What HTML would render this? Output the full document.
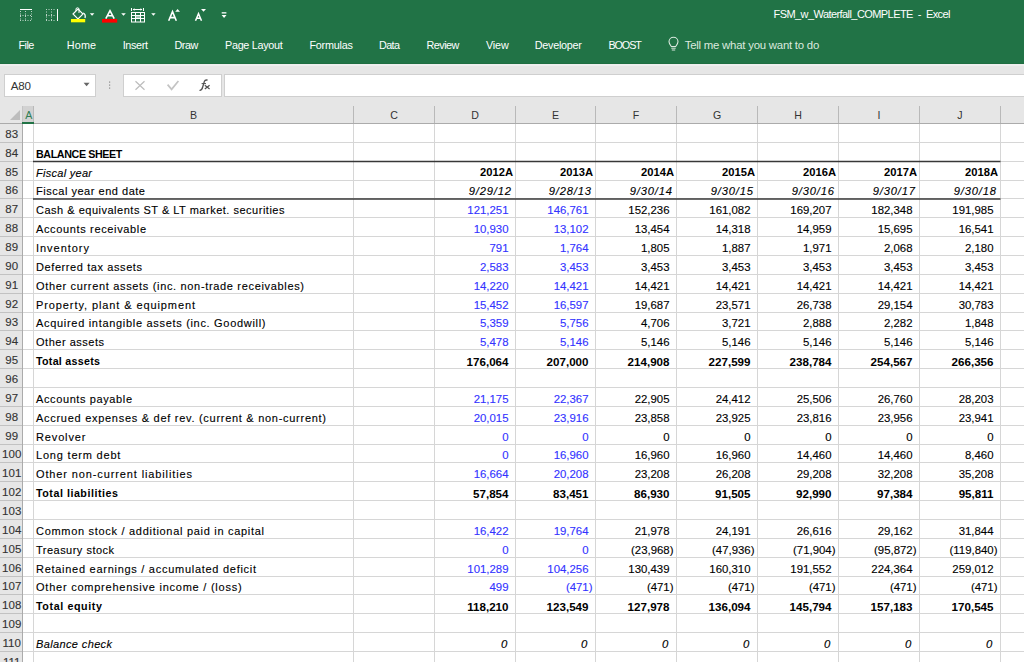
<!DOCTYPE html>
<html><head><meta charset="utf-8"><style>
html,body{margin:0;padding:0;width:1024px;height:662px;overflow:hidden;background:#fff;position:relative;font-family:"Liberation Sans",sans-serif;}
.t,.c{position:absolute;white-space:nowrap;line-height:1;}
.c{-webkit-text-stroke:0.12px currentColor;}
.cb{position:absolute;white-space:nowrap;line-height:1;}
.r{position:absolute;}
</style></head><body>
<div class="r" style="left:0px;top:0px;width:1024px;height:64px;background:#217346;"></div>
<div class="t" style="top:9.29px;font-size:11px;color:#fff;letter-spacing:-0.570px;left:773.50px;white-space:pre;">FSM_w_Waterfall_COMPLETE  -  Excel</div>
<div class="t" style="top:39.66px;font-size:10.8px;color:#fff;letter-spacing:-0.601px;left:18.60px;">File</div>
<div class="t" style="top:39.66px;font-size:10.8px;color:#fff;letter-spacing:0.163px;left:66.80px;">Home</div>
<div class="t" style="top:39.66px;font-size:10.8px;color:#fff;letter-spacing:-0.342px;left:122.70px;">Insert</div>
<div class="t" style="top:39.66px;font-size:10.8px;color:#fff;letter-spacing:-0.401px;left:174.40px;">Draw</div>
<div class="t" style="top:39.66px;font-size:10.8px;color:#fff;letter-spacing:-0.285px;left:225.00px;">Page Layout</div>
<div class="t" style="top:39.66px;font-size:10.8px;color:#fff;letter-spacing:-0.202px;left:309.40px;">Formulas</div>
<div class="t" style="top:39.66px;font-size:10.8px;color:#fff;letter-spacing:-0.604px;left:379.00px;">Data</div>
<div class="t" style="top:39.66px;font-size:10.8px;color:#fff;letter-spacing:-0.522px;left:426.60px;">Review</div>
<div class="t" style="top:39.66px;font-size:10.8px;color:#fff;letter-spacing:-0.172px;left:486.00px;">View</div>
<div class="t" style="top:39.66px;font-size:10.8px;color:#fff;letter-spacing:-0.254px;left:534.70px;">Developer</div>
<div class="t" style="top:39.66px;font-size:10.8px;color:#fff;letter-spacing:-1.076px;left:608.40px;">BOOST</div>
<div class="t" style="top:39.55px;font-size:11.4px;color:#dbe9df;letter-spacing:-0.230px;left:684.70px;">Tell me what you want to do</div>
<div class="r" style="left:0px;top:64px;width:1024px;height:60px;background:#e6e6e6;"></div>
<div class="r" style="left:0px;top:63px;width:1024px;height:1px;background:#1f6e41;"></div>
<div class="r" style="left:0px;top:64px;width:1024px;height:2px;background:#eeeeee;"></div>
<div class="r" style="left:4px;top:74px;width:92px;height:23px;background:#fff;border:1px solid #cfcfcf;box-sizing:border-box;"></div>
<div class="t" style="top:80.08px;font-size:11.6px;color:#333;letter-spacing:-0.170px;left:10.70px;">A80</div>
<div class="r" style="left:123px;top:74px;width:99px;height:23px;background:#fff;border:1px solid #cfcfcf;box-sizing:border-box;"></div>
<div class="r" style="left:224px;top:74px;width:800px;height:23px;background:#fff;border:1px solid #cfcfcf;border-right:none;box-sizing:border-box;"></div>
<div class="r" style="left:22px;top:106px;width:12px;height:17px;background:#d2d2d2;"></div>
<div class="t" style="top:110.33px;font-size:10.6px;color:#2f7d55;left:25.26px;">A</div>
<div class="t" style="top:110.33px;font-size:10.6px;color:#333;left:189.96px;">B</div>
<div class="t" style="top:110.33px;font-size:10.6px;color:#333;left:390.17px;">C</div>
<div class="t" style="top:110.33px;font-size:10.6px;color:#333;left:471.17px;">D</div>
<div class="t" style="top:110.33px;font-size:10.6px;color:#333;left:551.96px;">E</div>
<div class="t" style="top:110.33px;font-size:10.6px;color:#333;left:632.76px;">F</div>
<div class="t" style="top:110.33px;font-size:10.6px;color:#333;left:712.88px;">G</div>
<div class="t" style="top:110.33px;font-size:10.6px;color:#333;left:794.17px;">H</div>
<div class="t" style="top:110.33px;font-size:10.6px;color:#333;left:877.53px;">I</div>
<div class="t" style="top:110.33px;font-size:10.6px;color:#333;left:957.35px;">J</div>
<div class="r" style="left:23px;top:124px;width:1001px;height:538px;background:#fff;"></div>
<div class="r" style="left:0px;top:124px;width:22px;height:538px;background:#e6e6e6;"></div>
<div class="r" style="left:23px;top:142px;width:1001px;height:1px;background:#d6d6d6;"></div>
<div class="r" style="left:0px;top:142px;width:22px;height:1px;background:#c2c2c2;"></div>
<div class="r" style="left:23px;top:161px;width:1001px;height:1px;background:#d6d6d6;"></div>
<div class="r" style="left:0px;top:161px;width:22px;height:1px;background:#c2c2c2;"></div>
<div class="r" style="left:23px;top:180px;width:1001px;height:1px;background:#d6d6d6;"></div>
<div class="r" style="left:0px;top:180px;width:22px;height:1px;background:#c2c2c2;"></div>
<div class="r" style="left:23px;top:198px;width:1001px;height:1px;background:#d6d6d6;"></div>
<div class="r" style="left:0px;top:198px;width:22px;height:1px;background:#c2c2c2;"></div>
<div class="r" style="left:23px;top:217px;width:1001px;height:1px;background:#d6d6d6;"></div>
<div class="r" style="left:0px;top:217px;width:22px;height:1px;background:#c2c2c2;"></div>
<div class="r" style="left:23px;top:236px;width:1001px;height:1px;background:#d6d6d6;"></div>
<div class="r" style="left:0px;top:236px;width:22px;height:1px;background:#c2c2c2;"></div>
<div class="r" style="left:23px;top:255px;width:1001px;height:1px;background:#d6d6d6;"></div>
<div class="r" style="left:0px;top:255px;width:22px;height:1px;background:#c2c2c2;"></div>
<div class="r" style="left:23px;top:274px;width:1001px;height:1px;background:#d6d6d6;"></div>
<div class="r" style="left:0px;top:274px;width:22px;height:1px;background:#c2c2c2;"></div>
<div class="r" style="left:23px;top:293px;width:1001px;height:1px;background:#d6d6d6;"></div>
<div class="r" style="left:0px;top:293px;width:22px;height:1px;background:#c2c2c2;"></div>
<div class="r" style="left:23px;top:312px;width:1001px;height:1px;background:#d6d6d6;"></div>
<div class="r" style="left:0px;top:312px;width:22px;height:1px;background:#c2c2c2;"></div>
<div class="r" style="left:23px;top:330px;width:1001px;height:1px;background:#d6d6d6;"></div>
<div class="r" style="left:0px;top:330px;width:22px;height:1px;background:#c2c2c2;"></div>
<div class="r" style="left:23px;top:349px;width:1001px;height:1px;background:#d6d6d6;"></div>
<div class="r" style="left:0px;top:349px;width:22px;height:1px;background:#c2c2c2;"></div>
<div class="r" style="left:23px;top:368px;width:1001px;height:1px;background:#d6d6d6;"></div>
<div class="r" style="left:0px;top:368px;width:22px;height:1px;background:#c2c2c2;"></div>
<div class="r" style="left:23px;top:387px;width:1001px;height:1px;background:#d6d6d6;"></div>
<div class="r" style="left:0px;top:387px;width:22px;height:1px;background:#c2c2c2;"></div>
<div class="r" style="left:23px;top:406px;width:1001px;height:1px;background:#d6d6d6;"></div>
<div class="r" style="left:0px;top:406px;width:22px;height:1px;background:#c2c2c2;"></div>
<div class="r" style="left:23px;top:425px;width:1001px;height:1px;background:#d6d6d6;"></div>
<div class="r" style="left:0px;top:425px;width:22px;height:1px;background:#c2c2c2;"></div>
<div class="r" style="left:23px;top:444px;width:1001px;height:1px;background:#d6d6d6;"></div>
<div class="r" style="left:0px;top:444px;width:22px;height:1px;background:#c2c2c2;"></div>
<div class="r" style="left:23px;top:462px;width:1001px;height:1px;background:#d6d6d6;"></div>
<div class="r" style="left:0px;top:462px;width:22px;height:1px;background:#c2c2c2;"></div>
<div class="r" style="left:23px;top:481px;width:1001px;height:1px;background:#d6d6d6;"></div>
<div class="r" style="left:0px;top:481px;width:22px;height:1px;background:#c2c2c2;"></div>
<div class="r" style="left:23px;top:500px;width:1001px;height:1px;background:#d6d6d6;"></div>
<div class="r" style="left:0px;top:500px;width:22px;height:1px;background:#c2c2c2;"></div>
<div class="r" style="left:23px;top:519px;width:1001px;height:1px;background:#d6d6d6;"></div>
<div class="r" style="left:0px;top:519px;width:22px;height:1px;background:#c2c2c2;"></div>
<div class="r" style="left:23px;top:538px;width:1001px;height:1px;background:#d6d6d6;"></div>
<div class="r" style="left:0px;top:538px;width:22px;height:1px;background:#c2c2c2;"></div>
<div class="r" style="left:23px;top:557px;width:1001px;height:1px;background:#d6d6d6;"></div>
<div class="r" style="left:0px;top:557px;width:22px;height:1px;background:#c2c2c2;"></div>
<div class="r" style="left:23px;top:576px;width:1001px;height:1px;background:#d6d6d6;"></div>
<div class="r" style="left:0px;top:576px;width:22px;height:1px;background:#c2c2c2;"></div>
<div class="r" style="left:23px;top:594px;width:1001px;height:1px;background:#d6d6d6;"></div>
<div class="r" style="left:0px;top:594px;width:22px;height:1px;background:#c2c2c2;"></div>
<div class="r" style="left:23px;top:613px;width:1001px;height:1px;background:#d6d6d6;"></div>
<div class="r" style="left:0px;top:613px;width:22px;height:1px;background:#c2c2c2;"></div>
<div class="r" style="left:23px;top:632px;width:1001px;height:1px;background:#d6d6d6;"></div>
<div class="r" style="left:0px;top:632px;width:22px;height:1px;background:#c2c2c2;"></div>
<div class="r" style="left:23px;top:651px;width:1001px;height:1px;background:#d6d6d6;"></div>
<div class="r" style="left:0px;top:651px;width:22px;height:1px;background:#c2c2c2;"></div>
<div class="r" style="left:33px;top:124px;width:1px;height:538px;background:#d6d6d6;"></div>
<div class="r" style="left:353px;top:124px;width:1px;height:538px;background:#d6d6d6;"></div>
<div class="r" style="left:434px;top:124px;width:1px;height:538px;background:#d6d6d6;"></div>
<div class="r" style="left:515px;top:124px;width:1px;height:538px;background:#d6d6d6;"></div>
<div class="r" style="left:595px;top:124px;width:1px;height:538px;background:#d6d6d6;"></div>
<div class="r" style="left:676px;top:124px;width:1px;height:538px;background:#d6d6d6;"></div>
<div class="r" style="left:757px;top:124px;width:1px;height:538px;background:#d6d6d6;"></div>
<div class="r" style="left:838px;top:124px;width:1px;height:538px;background:#d6d6d6;"></div>
<div class="r" style="left:919px;top:124px;width:1px;height:538px;background:#d6d6d6;"></div>
<div class="r" style="left:1000px;top:124px;width:1px;height:538px;background:#d6d6d6;"></div>
<div class="r" style="left:353px;top:106px;width:1px;height:17px;background:#b9b9b9;"></div>
<div class="r" style="left:434px;top:106px;width:1px;height:17px;background:#b9b9b9;"></div>
<div class="r" style="left:515px;top:106px;width:1px;height:17px;background:#b9b9b9;"></div>
<div class="r" style="left:595px;top:106px;width:1px;height:17px;background:#b9b9b9;"></div>
<div class="r" style="left:676px;top:106px;width:1px;height:17px;background:#b9b9b9;"></div>
<div class="r" style="left:757px;top:106px;width:1px;height:17px;background:#b9b9b9;"></div>
<div class="r" style="left:838px;top:106px;width:1px;height:17px;background:#b9b9b9;"></div>
<div class="r" style="left:919px;top:106px;width:1px;height:17px;background:#b9b9b9;"></div>
<div class="r" style="left:1000px;top:106px;width:1px;height:17px;background:#b9b9b9;"></div>
<div class="r" style="left:33px;top:106px;width:1px;height:17px;background:#b9b9b9;"></div>
<div class="r" style="left:0px;top:123px;width:1024px;height:1px;background:#ababab;"></div>
<div class="r" style="left:22px;top:123px;width:1px;height:539px;background:#ababab;"></div>
<div class="r" style="left:22px;top:106px;width:1px;height:17px;background:#c4c4c4;"></div>
<div class="r" style="left:22px;top:122px;width:12px;height:2px;background:#217346;"></div>
<svg class="r" style="left:10px;top:110px" width="10" height="10"><path d="M10 0 L10 10 L0 10 Z" fill="#bdbdbd"/></svg>
<div class="c" style="top:129.27px;font-size:11.5px;color:#333;left:5.30px;">83</div>
<div class="c" style="top:148.27px;font-size:11.5px;color:#333;left:5.30px;">84</div>
<div class="c" style="top:167.27px;font-size:11.5px;color:#333;left:5.30px;">85</div>
<div class="c" style="top:185.27px;font-size:11.5px;color:#333;left:5.30px;">86</div>
<div class="c" style="top:204.27px;font-size:11.5px;color:#333;left:5.30px;">87</div>
<div class="c" style="top:223.27px;font-size:11.5px;color:#333;left:5.30px;">88</div>
<div class="c" style="top:242.27px;font-size:11.5px;color:#333;left:5.30px;">89</div>
<div class="c" style="top:261.27px;font-size:11.5px;color:#333;left:5.30px;">90</div>
<div class="c" style="top:280.27px;font-size:11.5px;color:#333;left:5.30px;">91</div>
<div class="c" style="top:299.27px;font-size:11.5px;color:#333;left:5.30px;">92</div>
<div class="c" style="top:317.27px;font-size:11.5px;color:#333;left:5.30px;">93</div>
<div class="c" style="top:336.27px;font-size:11.5px;color:#333;left:5.30px;">94</div>
<div class="c" style="top:355.27px;font-size:11.5px;color:#333;left:5.30px;">95</div>
<div class="c" style="top:374.27px;font-size:11.5px;color:#333;left:5.30px;">96</div>
<div class="c" style="top:393.27px;font-size:11.5px;color:#333;left:5.30px;">97</div>
<div class="c" style="top:412.27px;font-size:11.5px;color:#333;left:5.30px;">98</div>
<div class="c" style="top:431.27px;font-size:11.5px;color:#333;left:5.30px;">99</div>
<div class="c" style="top:449.27px;font-size:11.5px;color:#333;left:2.11px;">100</div>
<div class="c" style="top:468.27px;font-size:11.5px;color:#333;left:2.11px;">101</div>
<div class="c" style="top:487.27px;font-size:11.5px;color:#333;left:2.11px;">102</div>
<div class="c" style="top:506.27px;font-size:11.5px;color:#333;left:2.11px;">103</div>
<div class="c" style="top:525.27px;font-size:11.5px;color:#333;left:2.11px;">104</div>
<div class="c" style="top:544.27px;font-size:11.5px;color:#333;left:2.11px;">105</div>
<div class="c" style="top:563.27px;font-size:11.5px;color:#333;left:2.11px;">106</div>
<div class="c" style="top:581.27px;font-size:11.5px;color:#333;left:2.11px;">107</div>
<div class="c" style="top:600.27px;font-size:11.5px;color:#333;left:2.11px;">108</div>
<div class="c" style="top:619.27px;font-size:11.5px;color:#333;left:2.11px;">109</div>
<div class="c" style="top:638.27px;font-size:11.5px;color:#333;left:2.53px;">110</div>
<div class="c" style="top:657.27px;font-size:11.5px;color:#333;left:2.96px;">111</div>
<div class="cb" style="top:148.94px;font-size:10.7px;color:#000;font-weight:bold;letter-spacing:-0.372px;left:36.00px;">BALANCE SHEET</div>
<div class="c" style="top:167.69px;font-size:11px;color:#000;font-style:italic;letter-spacing:0.282px;left:36.00px;">Fiscal year</div>
<div class="c" style="top:185.69px;font-size:11px;color:#000;letter-spacing:0.523px;left:36.00px;">Fiscal year end date</div>
<div class="c" style="top:204.69px;font-size:11px;color:#000;letter-spacing:0.506px;left:36.00px;">Cash &amp; equivalents ST &amp; LT market. securities</div>
<div class="c" style="top:223.69px;font-size:11px;color:#000;letter-spacing:0.642px;left:36.00px;">Accounts receivable</div>
<div class="c" style="top:242.69px;font-size:11px;color:#000;letter-spacing:0.969px;left:36.00px;">Inventory</div>
<div class="c" style="top:261.69px;font-size:11px;color:#000;letter-spacing:0.590px;left:36.00px;">Deferred tax assets</div>
<div class="c" style="top:280.69px;font-size:11px;color:#000;letter-spacing:0.667px;left:36.00px;">Other current assets (inc. non-trade receivables)</div>
<div class="c" style="top:299.69px;font-size:11px;color:#000;letter-spacing:0.902px;left:36.00px;">Property, plant &amp; equipment</div>
<div class="c" style="top:317.69px;font-size:11px;color:#000;letter-spacing:0.691px;left:36.00px;">Acquired intangible assets (inc. Goodwill)</div>
<div class="c" style="top:336.69px;font-size:11px;color:#000;letter-spacing:0.513px;left:36.00px;">Other assets</div>
<div class="cb" style="top:355.94px;font-size:10.7px;color:#000;font-weight:bold;letter-spacing:0.268px;left:36.00px;">Total assets</div>
<div class="c" style="top:393.69px;font-size:11px;color:#000;letter-spacing:0.611px;left:36.00px;">Accounts payable</div>
<div class="c" style="top:412.69px;font-size:11px;color:#000;letter-spacing:0.717px;left:36.00px;">Accrued expenses &amp; def rev. (current &amp; non-current)</div>
<div class="c" style="top:431.69px;font-size:11px;color:#000;letter-spacing:0.856px;left:36.00px;">Revolver</div>
<div class="c" style="top:449.69px;font-size:11px;color:#000;letter-spacing:0.800px;left:36.00px;">Long term debt</div>
<div class="c" style="top:468.69px;font-size:11px;color:#000;letter-spacing:0.877px;left:36.00px;">Other non-current liabilities</div>
<div class="cb" style="top:487.94px;font-size:10.7px;color:#000;font-weight:bold;letter-spacing:0.530px;left:36.00px;">Total liabilities</div>
<div class="c" style="top:525.69px;font-size:11px;color:#000;letter-spacing:0.701px;left:36.00px;">Common stock / additional paid in capital</div>
<div class="c" style="top:544.69px;font-size:11px;color:#000;letter-spacing:0.483px;left:36.00px;">Treasury stock</div>
<div class="c" style="top:563.69px;font-size:11px;color:#000;letter-spacing:0.721px;left:36.00px;">Retained earnings / accumulated deficit</div>
<div class="c" style="top:581.69px;font-size:11px;color:#000;letter-spacing:0.761px;left:36.00px;">Other comprehensive income / (loss)</div>
<div class="cb" style="top:600.94px;font-size:10.7px;color:#000;font-weight:bold;letter-spacing:0.614px;left:36.00px;">Total equity</div>
<div class="c" style="top:638.69px;font-size:11px;color:#000;font-style:italic;letter-spacing:0.371px;left:36.00px;">Balance check</div>
<div class="cb" style="top:167.32px;font-size:11.2px;color:#000;font-weight:bold;right:511.00px;text-align:right;">2012A</div>
<div class="cb" style="top:167.32px;font-size:11.2px;color:#000;font-weight:bold;right:431.00px;text-align:right;">2013A</div>
<div class="cb" style="top:167.32px;font-size:11.2px;color:#000;font-weight:bold;right:350.00px;text-align:right;">2014A</div>
<div class="cb" style="top:167.32px;font-size:11.2px;color:#000;font-weight:bold;right:269.00px;text-align:right;">2015A</div>
<div class="cb" style="top:167.32px;font-size:11.2px;color:#000;font-weight:bold;right:188.00px;text-align:right;">2016A</div>
<div class="cb" style="top:167.32px;font-size:11.2px;color:#000;font-weight:bold;right:107.00px;text-align:right;">2017A</div>
<div class="cb" style="top:167.32px;font-size:11.2px;color:#000;font-weight:bold;right:26.00px;text-align:right;">2018A</div>
<div class="c" style="top:185.52px;font-size:11.2px;color:#000;font-style:italic;letter-spacing:0.805px;right:512.19px;text-align:right;">9/29/12</div>
<div class="c" style="top:185.52px;font-size:11.2px;color:#000;font-style:italic;letter-spacing:0.805px;right:432.19px;text-align:right;">9/28/13</div>
<div class="c" style="top:185.52px;font-size:11.2px;color:#000;font-style:italic;letter-spacing:0.805px;right:351.19px;text-align:right;">9/30/14</div>
<div class="c" style="top:185.52px;font-size:11.2px;color:#000;font-style:italic;letter-spacing:0.805px;right:270.19px;text-align:right;">9/30/15</div>
<div class="c" style="top:185.52px;font-size:11.2px;color:#000;font-style:italic;letter-spacing:0.805px;right:189.19px;text-align:right;">9/30/16</div>
<div class="c" style="top:185.52px;font-size:11.2px;color:#000;font-style:italic;letter-spacing:0.805px;right:108.19px;text-align:right;">9/30/17</div>
<div class="c" style="top:185.52px;font-size:11.2px;color:#000;font-style:italic;letter-spacing:0.805px;right:27.19px;text-align:right;">9/30/18</div>
<div class="c" style="top:204.85px;font-size:11.4px;color:#3333ff;right:515.50px;text-align:right;">121,251</div>
<div class="c" style="top:204.85px;font-size:11.4px;color:#3333ff;right:435.50px;text-align:right;">146,761</div>
<div class="c" style="top:204.85px;font-size:11.4px;color:#000;right:354.50px;text-align:right;">152,236</div>
<div class="c" style="top:204.85px;font-size:11.4px;color:#000;right:273.50px;text-align:right;">161,082</div>
<div class="c" style="top:204.85px;font-size:11.4px;color:#000;right:192.50px;text-align:right;">169,207</div>
<div class="c" style="top:204.85px;font-size:11.4px;color:#000;right:111.50px;text-align:right;">182,348</div>
<div class="c" style="top:204.85px;font-size:11.4px;color:#000;right:30.50px;text-align:right;">191,985</div>
<div class="c" style="top:223.85px;font-size:11.4px;color:#3333ff;right:515.50px;text-align:right;">10,930</div>
<div class="c" style="top:223.85px;font-size:11.4px;color:#3333ff;right:435.50px;text-align:right;">13,102</div>
<div class="c" style="top:223.85px;font-size:11.4px;color:#000;right:354.50px;text-align:right;">13,454</div>
<div class="c" style="top:223.85px;font-size:11.4px;color:#000;right:273.50px;text-align:right;">14,318</div>
<div class="c" style="top:223.85px;font-size:11.4px;color:#000;right:192.50px;text-align:right;">14,959</div>
<div class="c" style="top:223.85px;font-size:11.4px;color:#000;right:111.50px;text-align:right;">15,695</div>
<div class="c" style="top:223.85px;font-size:11.4px;color:#000;right:30.50px;text-align:right;">16,541</div>
<div class="c" style="top:242.85px;font-size:11.4px;color:#3333ff;right:515.50px;text-align:right;">791</div>
<div class="c" style="top:242.85px;font-size:11.4px;color:#3333ff;right:435.50px;text-align:right;">1,764</div>
<div class="c" style="top:242.85px;font-size:11.4px;color:#000;right:354.50px;text-align:right;">1,805</div>
<div class="c" style="top:242.85px;font-size:11.4px;color:#000;right:273.50px;text-align:right;">1,887</div>
<div class="c" style="top:242.85px;font-size:11.4px;color:#000;right:192.50px;text-align:right;">1,971</div>
<div class="c" style="top:242.85px;font-size:11.4px;color:#000;right:111.50px;text-align:right;">2,068</div>
<div class="c" style="top:242.85px;font-size:11.4px;color:#000;right:30.50px;text-align:right;">2,180</div>
<div class="c" style="top:261.85px;font-size:11.4px;color:#3333ff;right:515.50px;text-align:right;">2,583</div>
<div class="c" style="top:261.85px;font-size:11.4px;color:#3333ff;right:435.50px;text-align:right;">3,453</div>
<div class="c" style="top:261.85px;font-size:11.4px;color:#000;right:354.50px;text-align:right;">3,453</div>
<div class="c" style="top:261.85px;font-size:11.4px;color:#000;right:273.50px;text-align:right;">3,453</div>
<div class="c" style="top:261.85px;font-size:11.4px;color:#000;right:192.50px;text-align:right;">3,453</div>
<div class="c" style="top:261.85px;font-size:11.4px;color:#000;right:111.50px;text-align:right;">3,453</div>
<div class="c" style="top:261.85px;font-size:11.4px;color:#000;right:30.50px;text-align:right;">3,453</div>
<div class="c" style="top:280.85px;font-size:11.4px;color:#3333ff;right:515.50px;text-align:right;">14,220</div>
<div class="c" style="top:280.85px;font-size:11.4px;color:#3333ff;right:435.50px;text-align:right;">14,421</div>
<div class="c" style="top:280.85px;font-size:11.4px;color:#000;right:354.50px;text-align:right;">14,421</div>
<div class="c" style="top:280.85px;font-size:11.4px;color:#000;right:273.50px;text-align:right;">14,421</div>
<div class="c" style="top:280.85px;font-size:11.4px;color:#000;right:192.50px;text-align:right;">14,421</div>
<div class="c" style="top:280.85px;font-size:11.4px;color:#000;right:111.50px;text-align:right;">14,421</div>
<div class="c" style="top:280.85px;font-size:11.4px;color:#000;right:30.50px;text-align:right;">14,421</div>
<div class="c" style="top:299.85px;font-size:11.4px;color:#3333ff;right:515.50px;text-align:right;">15,452</div>
<div class="c" style="top:299.85px;font-size:11.4px;color:#3333ff;right:435.50px;text-align:right;">16,597</div>
<div class="c" style="top:299.85px;font-size:11.4px;color:#000;right:354.50px;text-align:right;">19,687</div>
<div class="c" style="top:299.85px;font-size:11.4px;color:#000;right:273.50px;text-align:right;">23,571</div>
<div class="c" style="top:299.85px;font-size:11.4px;color:#000;right:192.50px;text-align:right;">26,738</div>
<div class="c" style="top:299.85px;font-size:11.4px;color:#000;right:111.50px;text-align:right;">29,154</div>
<div class="c" style="top:299.85px;font-size:11.4px;color:#000;right:30.50px;text-align:right;">30,783</div>
<div class="c" style="top:317.85px;font-size:11.4px;color:#3333ff;right:515.50px;text-align:right;">5,359</div>
<div class="c" style="top:317.85px;font-size:11.4px;color:#3333ff;right:435.50px;text-align:right;">5,756</div>
<div class="c" style="top:317.85px;font-size:11.4px;color:#000;right:354.50px;text-align:right;">4,706</div>
<div class="c" style="top:317.85px;font-size:11.4px;color:#000;right:273.50px;text-align:right;">3,721</div>
<div class="c" style="top:317.85px;font-size:11.4px;color:#000;right:192.50px;text-align:right;">2,888</div>
<div class="c" style="top:317.85px;font-size:11.4px;color:#000;right:111.50px;text-align:right;">2,282</div>
<div class="c" style="top:317.85px;font-size:11.4px;color:#000;right:30.50px;text-align:right;">1,848</div>
<div class="c" style="top:336.85px;font-size:11.4px;color:#3333ff;right:515.50px;text-align:right;">5,478</div>
<div class="c" style="top:336.85px;font-size:11.4px;color:#3333ff;right:435.50px;text-align:right;">5,146</div>
<div class="c" style="top:336.85px;font-size:11.4px;color:#000;right:354.50px;text-align:right;">5,146</div>
<div class="c" style="top:336.85px;font-size:11.4px;color:#000;right:273.50px;text-align:right;">5,146</div>
<div class="c" style="top:336.85px;font-size:11.4px;color:#000;right:192.50px;text-align:right;">5,146</div>
<div class="c" style="top:336.85px;font-size:11.4px;color:#000;right:111.50px;text-align:right;">5,146</div>
<div class="c" style="top:336.85px;font-size:11.4px;color:#000;right:30.50px;text-align:right;">5,146</div>
<div class="cb" style="top:355.68px;font-size:11.6px;color:#000;font-weight:bold;right:515.50px;text-align:right;">176,064</div>
<div class="cb" style="top:355.68px;font-size:11.6px;color:#000;font-weight:bold;right:435.50px;text-align:right;">207,000</div>
<div class="cb" style="top:355.68px;font-size:11.6px;color:#000;font-weight:bold;right:354.50px;text-align:right;">214,908</div>
<div class="cb" style="top:355.68px;font-size:11.6px;color:#000;font-weight:bold;right:273.50px;text-align:right;">227,599</div>
<div class="cb" style="top:355.68px;font-size:11.6px;color:#000;font-weight:bold;right:192.50px;text-align:right;">238,784</div>
<div class="cb" style="top:355.68px;font-size:11.6px;color:#000;font-weight:bold;right:111.50px;text-align:right;">254,567</div>
<div class="cb" style="top:355.68px;font-size:11.6px;color:#000;font-weight:bold;right:30.50px;text-align:right;">266,356</div>
<div class="c" style="top:393.85px;font-size:11.4px;color:#3333ff;right:515.50px;text-align:right;">21,175</div>
<div class="c" style="top:393.85px;font-size:11.4px;color:#3333ff;right:435.50px;text-align:right;">22,367</div>
<div class="c" style="top:393.85px;font-size:11.4px;color:#000;right:354.50px;text-align:right;">22,905</div>
<div class="c" style="top:393.85px;font-size:11.4px;color:#000;right:273.50px;text-align:right;">24,412</div>
<div class="c" style="top:393.85px;font-size:11.4px;color:#000;right:192.50px;text-align:right;">25,506</div>
<div class="c" style="top:393.85px;font-size:11.4px;color:#000;right:111.50px;text-align:right;">26,760</div>
<div class="c" style="top:393.85px;font-size:11.4px;color:#000;right:30.50px;text-align:right;">28,203</div>
<div class="c" style="top:412.85px;font-size:11.4px;color:#3333ff;right:515.50px;text-align:right;">20,015</div>
<div class="c" style="top:412.85px;font-size:11.4px;color:#3333ff;right:435.50px;text-align:right;">23,916</div>
<div class="c" style="top:412.85px;font-size:11.4px;color:#000;right:354.50px;text-align:right;">23,858</div>
<div class="c" style="top:412.85px;font-size:11.4px;color:#000;right:273.50px;text-align:right;">23,925</div>
<div class="c" style="top:412.85px;font-size:11.4px;color:#000;right:192.50px;text-align:right;">23,816</div>
<div class="c" style="top:412.85px;font-size:11.4px;color:#000;right:111.50px;text-align:right;">23,956</div>
<div class="c" style="top:412.85px;font-size:11.4px;color:#000;right:30.50px;text-align:right;">23,941</div>
<div class="c" style="top:431.85px;font-size:11.4px;color:#3333ff;right:515.50px;text-align:right;">0</div>
<div class="c" style="top:431.85px;font-size:11.4px;color:#3333ff;right:435.50px;text-align:right;">0</div>
<div class="c" style="top:431.85px;font-size:11.4px;color:#000;right:354.50px;text-align:right;">0</div>
<div class="c" style="top:431.85px;font-size:11.4px;color:#000;right:273.50px;text-align:right;">0</div>
<div class="c" style="top:431.85px;font-size:11.4px;color:#000;right:192.50px;text-align:right;">0</div>
<div class="c" style="top:431.85px;font-size:11.4px;color:#000;right:111.50px;text-align:right;">0</div>
<div class="c" style="top:431.85px;font-size:11.4px;color:#000;right:30.50px;text-align:right;">0</div>
<div class="c" style="top:449.85px;font-size:11.4px;color:#3333ff;right:515.50px;text-align:right;">0</div>
<div class="c" style="top:449.85px;font-size:11.4px;color:#3333ff;right:435.50px;text-align:right;">16,960</div>
<div class="c" style="top:449.85px;font-size:11.4px;color:#000;right:354.50px;text-align:right;">16,960</div>
<div class="c" style="top:449.85px;font-size:11.4px;color:#000;right:273.50px;text-align:right;">16,960</div>
<div class="c" style="top:449.85px;font-size:11.4px;color:#000;right:192.50px;text-align:right;">14,460</div>
<div class="c" style="top:449.85px;font-size:11.4px;color:#000;right:111.50px;text-align:right;">14,460</div>
<div class="c" style="top:449.85px;font-size:11.4px;color:#000;right:30.50px;text-align:right;">8,460</div>
<div class="c" style="top:468.85px;font-size:11.4px;color:#3333ff;right:515.50px;text-align:right;">16,664</div>
<div class="c" style="top:468.85px;font-size:11.4px;color:#3333ff;right:435.50px;text-align:right;">20,208</div>
<div class="c" style="top:468.85px;font-size:11.4px;color:#000;right:354.50px;text-align:right;">23,208</div>
<div class="c" style="top:468.85px;font-size:11.4px;color:#000;right:273.50px;text-align:right;">26,208</div>
<div class="c" style="top:468.85px;font-size:11.4px;color:#000;right:192.50px;text-align:right;">29,208</div>
<div class="c" style="top:468.85px;font-size:11.4px;color:#000;right:111.50px;text-align:right;">32,208</div>
<div class="c" style="top:468.85px;font-size:11.4px;color:#000;right:30.50px;text-align:right;">35,208</div>
<div class="cb" style="top:487.68px;font-size:11.6px;color:#000;font-weight:bold;right:515.50px;text-align:right;">57,854</div>
<div class="cb" style="top:487.68px;font-size:11.6px;color:#000;font-weight:bold;right:435.50px;text-align:right;">83,451</div>
<div class="cb" style="top:487.68px;font-size:11.6px;color:#000;font-weight:bold;right:354.50px;text-align:right;">86,930</div>
<div class="cb" style="top:487.68px;font-size:11.6px;color:#000;font-weight:bold;right:273.50px;text-align:right;">91,505</div>
<div class="cb" style="top:487.68px;font-size:11.6px;color:#000;font-weight:bold;right:192.50px;text-align:right;">92,990</div>
<div class="cb" style="top:487.68px;font-size:11.6px;color:#000;font-weight:bold;right:111.50px;text-align:right;">97,384</div>
<div class="cb" style="top:487.68px;font-size:11.6px;color:#000;font-weight:bold;right:30.50px;text-align:right;">95,811</div>
<div class="c" style="top:525.85px;font-size:11.4px;color:#3333ff;right:515.50px;text-align:right;">16,422</div>
<div class="c" style="top:525.85px;font-size:11.4px;color:#3333ff;right:435.50px;text-align:right;">19,764</div>
<div class="c" style="top:525.85px;font-size:11.4px;color:#000;right:354.50px;text-align:right;">21,978</div>
<div class="c" style="top:525.85px;font-size:11.4px;color:#000;right:273.50px;text-align:right;">24,191</div>
<div class="c" style="top:525.85px;font-size:11.4px;color:#000;right:192.50px;text-align:right;">26,616</div>
<div class="c" style="top:525.85px;font-size:11.4px;color:#000;right:111.50px;text-align:right;">29,162</div>
<div class="c" style="top:525.85px;font-size:11.4px;color:#000;right:30.50px;text-align:right;">31,844</div>
<div class="c" style="top:544.85px;font-size:11.4px;color:#3333ff;right:515.50px;text-align:right;">0</div>
<div class="c" style="top:544.85px;font-size:11.4px;color:#3333ff;right:435.50px;text-align:right;">0</div>
<div class="c" style="top:544.85px;font-size:11.4px;color:#000;right:350.50px;text-align:right;">(23,968)</div>
<div class="c" style="top:544.85px;font-size:11.4px;color:#000;right:269.50px;text-align:right;">(47,936)</div>
<div class="c" style="top:544.85px;font-size:11.4px;color:#000;right:188.50px;text-align:right;">(71,904)</div>
<div class="c" style="top:544.85px;font-size:11.4px;color:#000;right:107.50px;text-align:right;">(95,872)</div>
<div class="c" style="top:544.85px;font-size:11.4px;color:#000;right:26.50px;text-align:right;">(119,840)</div>
<div class="c" style="top:563.85px;font-size:11.4px;color:#3333ff;right:515.50px;text-align:right;">101,289</div>
<div class="c" style="top:563.85px;font-size:11.4px;color:#3333ff;right:435.50px;text-align:right;">104,256</div>
<div class="c" style="top:563.85px;font-size:11.4px;color:#000;right:354.50px;text-align:right;">130,439</div>
<div class="c" style="top:563.85px;font-size:11.4px;color:#000;right:273.50px;text-align:right;">160,310</div>
<div class="c" style="top:563.85px;font-size:11.4px;color:#000;right:192.50px;text-align:right;">191,552</div>
<div class="c" style="top:563.85px;font-size:11.4px;color:#000;right:111.50px;text-align:right;">224,364</div>
<div class="c" style="top:563.85px;font-size:11.4px;color:#000;right:30.50px;text-align:right;">259,012</div>
<div class="c" style="top:581.85px;font-size:11.4px;color:#3333ff;right:515.50px;text-align:right;">499</div>
<div class="c" style="top:581.85px;font-size:11.4px;color:#3333ff;right:431.50px;text-align:right;">(471)</div>
<div class="c" style="top:581.85px;font-size:11.4px;color:#000;right:350.50px;text-align:right;">(471)</div>
<div class="c" style="top:581.85px;font-size:11.4px;color:#000;right:269.50px;text-align:right;">(471)</div>
<div class="c" style="top:581.85px;font-size:11.4px;color:#000;right:188.50px;text-align:right;">(471)</div>
<div class="c" style="top:581.85px;font-size:11.4px;color:#000;right:107.50px;text-align:right;">(471)</div>
<div class="c" style="top:581.85px;font-size:11.4px;color:#000;right:26.50px;text-align:right;">(471)</div>
<div class="cb" style="top:600.68px;font-size:11.6px;color:#000;font-weight:bold;right:515.50px;text-align:right;">118,210</div>
<div class="cb" style="top:600.68px;font-size:11.6px;color:#000;font-weight:bold;right:435.50px;text-align:right;">123,549</div>
<div class="cb" style="top:600.68px;font-size:11.6px;color:#000;font-weight:bold;right:354.50px;text-align:right;">127,978</div>
<div class="cb" style="top:600.68px;font-size:11.6px;color:#000;font-weight:bold;right:273.50px;text-align:right;">136,094</div>
<div class="cb" style="top:600.68px;font-size:11.6px;color:#000;font-weight:bold;right:192.50px;text-align:right;">145,794</div>
<div class="cb" style="top:600.68px;font-size:11.6px;color:#000;font-weight:bold;right:111.50px;text-align:right;">157,183</div>
<div class="cb" style="top:600.68px;font-size:11.6px;color:#000;font-weight:bold;right:30.50px;text-align:right;">170,545</div>
<div class="c" style="top:638.85px;font-size:11.4px;color:#000;font-style:italic;right:516.70px;text-align:right;">0</div>
<div class="c" style="top:638.85px;font-size:11.4px;color:#000;font-style:italic;right:436.70px;text-align:right;">0</div>
<div class="c" style="top:638.85px;font-size:11.4px;color:#000;font-style:italic;right:355.70px;text-align:right;">0</div>
<div class="c" style="top:638.85px;font-size:11.4px;color:#000;font-style:italic;right:274.70px;text-align:right;">0</div>
<div class="c" style="top:638.85px;font-size:11.4px;color:#000;font-style:italic;right:193.70px;text-align:right;">0</div>
<div class="c" style="top:638.85px;font-size:11.4px;color:#000;font-style:italic;right:112.70px;text-align:right;">0</div>
<div class="c" style="top:638.85px;font-size:11.4px;color:#000;font-style:italic;right:31.70px;text-align:right;">0</div>
<svg class="r" style="left:0;top:0" width="1024" height="100">
<g fill="none" stroke="#fff" stroke-width="1">
 <!-- icon1: borders, solid top -->
 <line x1="20" y1="9.5" x2="32" y2="9.5" stroke-width="1"/>
 <g stroke-dasharray="1 1.5" opacity="0.7">
  <line x1="20.5" y1="11" x2="20.5" y2="21"/><line x1="31.5" y1="11" x2="31.5" y2="21"/>
  <line x1="25.5" y1="11" x2="25.5" y2="21"/><line x1="20" y1="15.5" x2="32" y2="15.5"/>
  <line x1="20" y1="20.5" x2="32" y2="20.5"/>
 </g>
 <!-- icon2: borders, solid right -->
 <line x1="57.5" y1="9" x2="57.5" y2="21" stroke-width="1"/>
 <g stroke-dasharray="1 1.5" opacity="0.7">
  <line x1="46" y1="9.5" x2="56" y2="9.5"/><line x1="46" y1="20.5" x2="56" y2="20.5"/>
  <line x1="46.5" y1="9" x2="46.5" y2="21"/><line x1="51.5" y1="9" x2="51.5" y2="21"/>
  <line x1="46" y1="15.5" x2="56" y2="15.5"/>
 </g>
 <!-- paint bucket -->
 <path d="M73 14 L78 9 L83 14 L78 19 Z" stroke-width="1.1"/>
 <path d="M76 11 L76 8.5 Q77.5 7 79 8.5 L79 13" stroke-width="1"/>
 <path d="M83 13 Q86 14 85 18" stroke-width="1.3"/>
 <!-- font color A -->
 <path d="M105.8 18.6 L110 10.6 L114.2 18.6 M107.3 15.8 L112.7 15.8" stroke-width="1.6"/>
 <!-- table icon -->
 <rect x="131.5" y="12.5" width="13" height="9.5"/>
 <line x1="131.5" y1="15.5" x2="144.5" y2="15.5"/><line x1="131.5" y1="18.5" x2="144.5" y2="18.5"/>
 <line x1="135.5" y1="12.5" x2="135.5" y2="22"/><line x1="140.5" y1="12.5" x2="140.5" y2="22"/>
 <line x1="131.5" y1="8" x2="131.5" y2="11"/><line x1="143.5" y1="8" x2="143.5" y2="11"/>
 <line x1="133" y1="9.5" x2="142" y2="9.5"/>
 <!-- increase font A -->
 <path d="M168.7 20.8 L172.5 11.6 L176.3 20.8 M170.2 17.6 L174.8 17.6" stroke-width="1.6"/>
 <!-- decrease font A -->
 <path d="M195.5 20.8 L198.5 13.6 L201.5 20.8 M196.6 18.2 L200.4 18.2" stroke-width="1.5"/>
 <!-- lightbulb -->
 <path d="M671.3 46.5 Q669 43.5 669 41.8 A4.5 4.5 0 0 1 678 41.8 Q678 43.5 675.7 46.5 Z" stroke="#dbe9df" stroke-width="1.1"/>
 <line x1="671.3" y1="48.2" x2="675.7" y2="48.2" stroke="#dbe9df" stroke-width="1"/>
 <line x1="671.8" y1="50" x2="675.2" y2="50" stroke="#dbe9df" stroke-width="1"/>
</g>
<g fill="#fff">
 <polygon points="89.8,13.3 94.4,13.3 92.1,15.8"/>
 <polygon points="121.2,13.3 125.8,13.3 123.5,15.8"/>
 <polygon points="151.2,13.3 155.6,13.3 153.4,15.8"/>
 <polygon points="132.6,9.5 134.6,8.3 134.6,10.7"/><polygon points="142.4,9.5 140.4,8.3 140.4,10.7"/>
 <polygon points="175.2,11.8 177.6,9 180,11.8"/>
 <polygon points="201,9 206,9 203.5,11.8"/>
 <rect x="221.7" y="12.2" width="4.7" height="1.3"/>
 <polygon points="221.6,14.9 226.5,14.9 224.05,18.1"/>
</g>
<rect x="71" y="19" width="14.2" height="3.3" fill="#ffff00"/>
<rect x="102" y="19" width="15.2" height="3.6" fill="#ff0000"/>
<rect x="136" y="16" width="4" height="2" fill="#fff" opacity="0.6"/>
<!-- formula bar -->
<polygon points="83.6,82.8 89.6,82.8 86.6,86.2" fill="#666"/>
<g fill="#8a8a8a"><rect x="109" y="81.5" width="1.2" height="1.2"/><rect x="109" y="84.5" width="1.2" height="1.2"/><rect x="109" y="87.5" width="1.2" height="1.2"/></g>
<path d="M135.5 81.3 L144.5 89.7 M144.5 81.3 L135.5 89.7" stroke="#bcbcbc" stroke-width="1.2" fill="none"/>
<path d="M167.6 84.6 L171.6 89.4 L178.4 81" stroke="#c4c4c4" stroke-width="1.7" fill="none"/>
<path d="M199.5 90.3 Q201.8 90.6 202.7 87 L204.3 81.6 Q205.2 79.4 207.6 80.2" stroke="#505050" stroke-width="1.3" fill="none"/>
<path d="M201.6 83.6 L206 83.6" stroke="#505050" stroke-width="1"/>
<path d="M204.8 85.2 L209.6 89 M209.6 85.2 L204.8 89" stroke="#505050" stroke-width="1.2"/>
</svg>
<svg class="r" style="left:0;top:150px" width="1024" height="60"><line x1="33" y1="11.4" x2="1000.5" y2="11.4" stroke="#383838" stroke-width="1.5"/><line x1="33" y1="49.1" x2="1000.5" y2="49.1" stroke="#383838" stroke-width="1.5"/></svg>
</body></html>
